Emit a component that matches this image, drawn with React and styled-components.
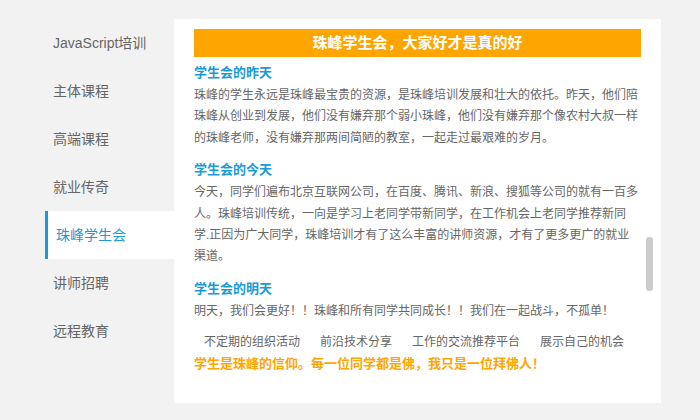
import React from 'react';
import styled, { createGlobalStyle } from 'styled-components';

const GlobalStyle = createGlobalStyle`
  html, body {
    margin: 0;
    padding: 0;
    background: #f2f2f2;
    font-family: "Liberation Sans", "Noto Sans CJK SC", sans-serif;
  }
`;

const Page = styled.div`
  display: flex;
  align-items: flex-start;
  padding: 19px 0 0 45px;
  height: 420px;
  box-sizing: border-box;
`;

const Nav = styled.ul`
  list-style: none;
  margin: 0;
  padding: 0;
  width: 129px;
`;

const NavItem = styled.li`
  height: 48px;
  line-height: 48px;
  font-size: 14px;
  padding-left: 8px;
  color: ${props => (props.active ? '#1a9ad6' : '#666')};
  background: ${props => (props.active ? '#fff' : 'transparent')};
  border-left: ${props => (props.active ? '3px solid #1a9ad6' : 'none')};
  white-space: nowrap;
`;

const Panel = styled.div`
  position: relative;
  width: 487px;
  height: 384px;
  box-sizing: border-box;
  padding: 10px 20px;
  background: #fff;
`;

const Title = styled.h2`
  margin: 0 0 4px 0;
  height: 28px;
  line-height: 28px;
  background: #ffa500;
  color: #fff;
  font-size: 15px;
  font-weight: bold;
  text-align: center;
`;

const Section = styled.div`
  margin-bottom: 9px;
`;

const Heading = styled.h3`
  margin: 0;
  font-size: 13px;
  line-height: 24px;
  font-weight: bold;
  color: #1a9ad6;
`;

const Text = styled.p`
  margin: 0;
  font-size: 12px;
  line-height: 21.4px;
  color: #666;
`;

const Activities = styled.ul`
  list-style: none;
  margin: 10px 0 0 0;
  padding: 0;
  display: flex;
  font-size: 12px;
  line-height: 21.4px;
  color: #666;
`;

const Activity = styled.li`
  padding: 0 10px;
`;

const Motto = styled.p`
  margin: 0;
  font-size: 13px;
  line-height: 20px;
  font-weight: bold;
  color: #ffa500;
`;

const ScrollThumb = styled.div`
  position: absolute;
  top: 218px;
  right: 8px;
  width: 7px;
  height: 54px;
  border-radius: 3px;
  background: #ccc;
`;

const navList = ['JavaScript培训', '主体课程', '高端课程', '就业传奇', '珠峰学生会', '讲师招聘', '远程教育'];

const sections = [
  {
    title: '学生会的昨天',
    text: '珠峰的学生永远是珠峰最宝贵的资源，是珠峰培训发展和壮大的依托。昨天，他们陪珠峰从创业到发展，他们没有嫌弃那个弱小珠峰，他们没有嫌弃那个像农村大叔一样的珠峰老师，没有嫌弃那两间简陋的教室，一起走过最艰难的岁月。',
  },
  {
    title: '学生会的今天',
    text: '今天，同学们遍布北京互联网公司，在百度、腾讯、新浪、搜狐等公司的就有一百多人。珠峰培训传统，一向是学习上老同学带新同学，在工作机会上老同学推荐新同学.正因为广大同学，珠峰培训才有了这么丰富的讲师资源，才有了更多更广的就业渠道。',
  },
  {
    title: '学生会的明天',
    text: '明天，我们会更好！！珠峰和所有同学共同成长！！我们在一起战斗，不孤单！',
  },
];

const activities = ['不定期的组织活动', '前沿技术分享', '工作的交流推荐平台', '展示自己的机会'];

const App = () => {
  return (
    <>
      <GlobalStyle />
      <Page>
        <Nav>
          {navList.map((item, index) => (
            <NavItem key={index} active={item === '珠峰学生会'}>
              {item}
            </NavItem>
          ))}
        </Nav>
        <Panel>
          <Title>珠峰学生会，大家好才是真的好</Title>
          {sections.map((s, index) => (
            <Section key={index}>
              <Heading>{s.title}</Heading>
              <Text>{s.text}</Text>
            </Section>
          ))}
          <Activities>
            {activities.map((a, index) => (
              <Activity key={index}>{a}</Activity>
            ))}
          </Activities>
          <Motto>学生是珠峰的信仰。每一位同学都是佛，我只是一位拜佛人！</Motto>
          <ScrollThumb />
        </Panel>
      </Page>
    </>
  );
};

export default App;
